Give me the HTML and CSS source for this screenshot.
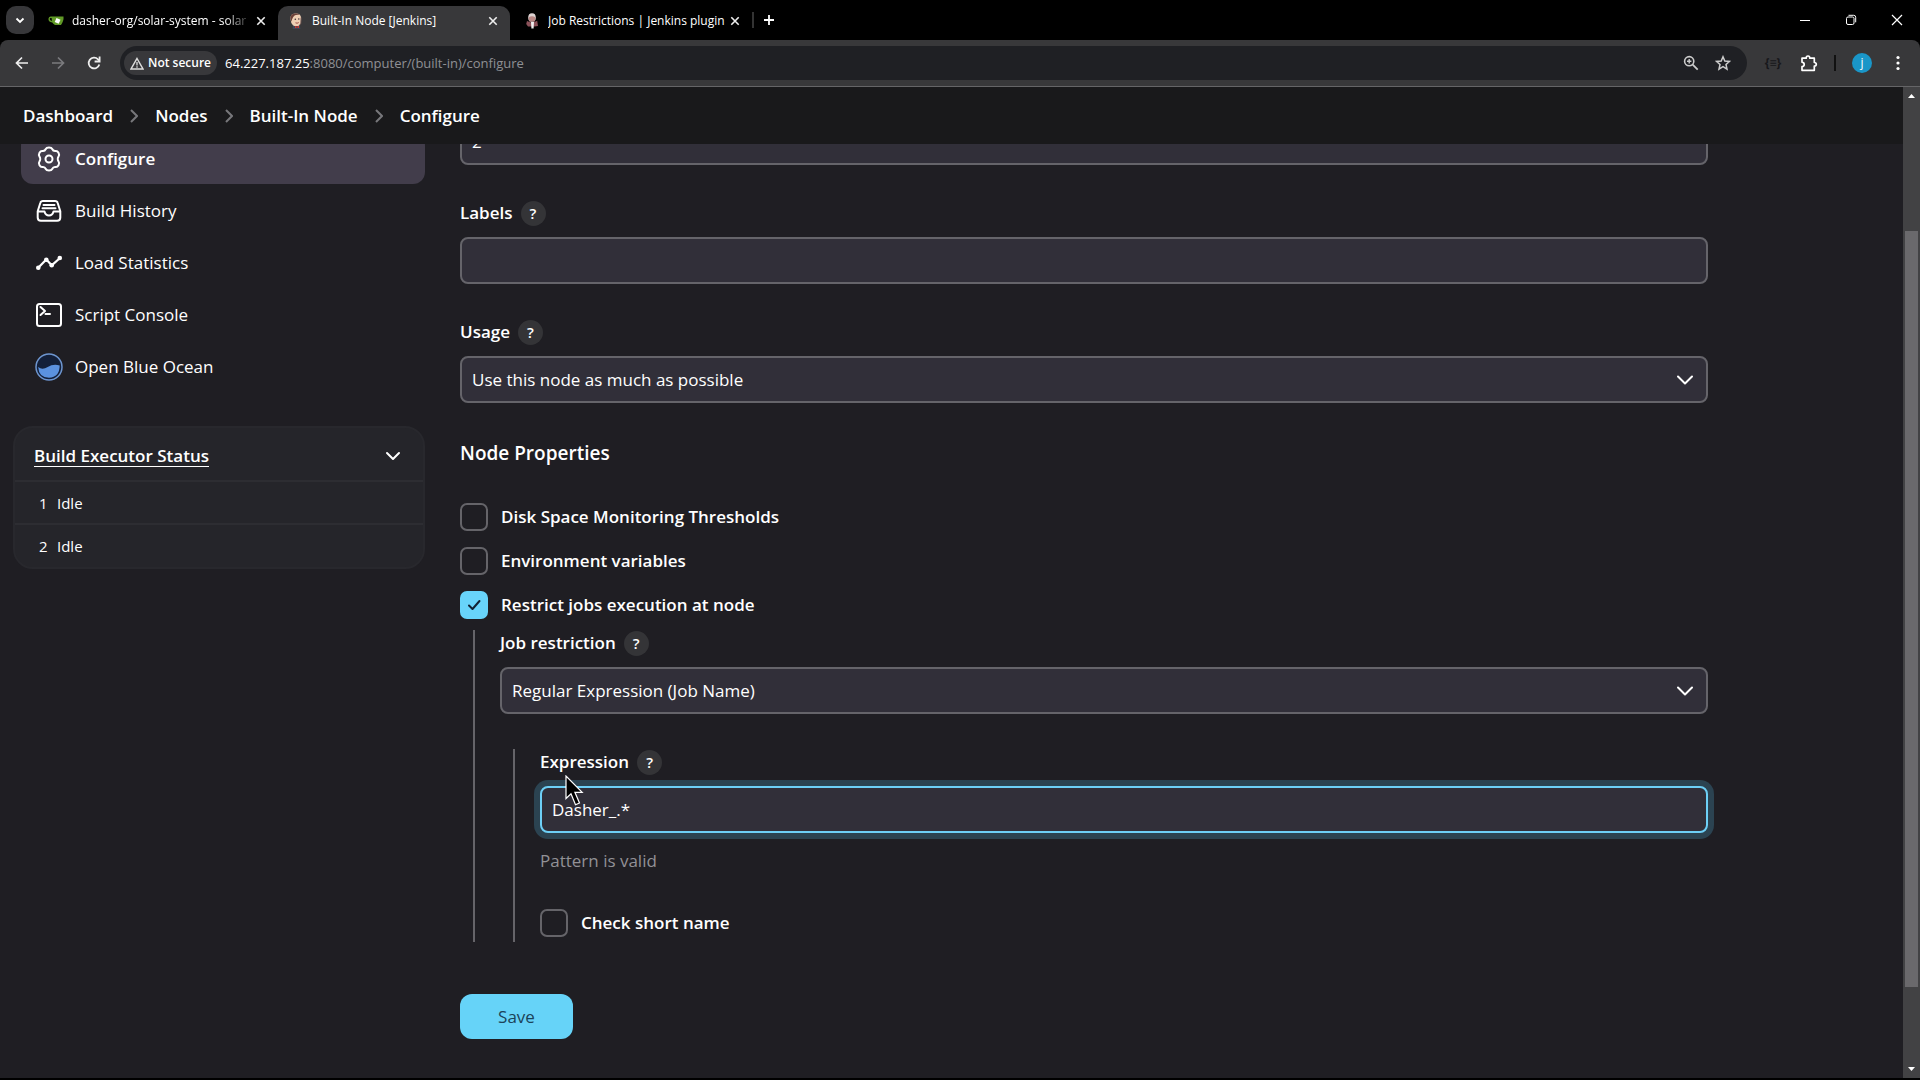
FILE: index.html
```
<!DOCTYPE html>
<html lang="en">
<head>
<meta charset="UTF-8">
<meta name="viewport" content="width=device-width, initial-scale=1.0">
<title>Built-In Node [Jenkins]</title>
<link rel="stylesheet" href="styles.css">
</head>
<body>
<div class="browser">
    <!-- Tab strip -->
    <div class="tab-strip">
        <button class="tab-search" aria-label="Search tabs">
            <svg width="12" height="12" viewBox="0 0 12 12"><path d="M2.5 4.5L6 8l3.5-3.5" fill="none" stroke="#fff" stroke-width="1.8"/></svg>
        </button>
        <div class="tab tab-first">
            <svg class="favicon" width="16" height="16" viewBox="0 0 16 16"><path d="M3.5 3.5H15.500q.5 4-2.500 8.500H7Q5 10.500 4.300 9.500 0 9 .5 5.500 1 3 3.500 3.500zM3.600 5q-2-.5-1.800 1 .2 1.700 2.200 2z" fill="#609926" fill-rule="evenodd"/><path d="M8.500 5l4 1.800-1.800 4-4-1.800z" fill="#fff"/></svg>
            <span class="tab-title faded">dasher-org/solar-system - solar</span>
            <button class="tab-close" aria-label="Close tab"><svg width="10" height="10" viewBox="0 0 10 10"><path d="M1.300 1.300l7.400 7.400M8.700 1.300L1.300 8.700" stroke="#eee" stroke-width="1.600"/></svg></button>
        </div>
        <div class="tab active">
            <svg class="favicon" width="16" height="16" viewBox="0 0 16 16"><path d="M2.500 6Q2 1 7 .6 12.500 0 13.200 5L13 10 11 13H5.500Q2.500 10 2.500 6z" fill="#efcfb4"/><path d="M2.500 6Q2 1 7 .6 10 .4 11.500 2 7 1 5.200 4L4 6.500l-.2 2.200z" fill="#6b4038"/><path d="M13.200 4.500l-.3 6-1.400 2" fill="none" stroke="#5a4646"/><circle cx="7.300" cy="6.200" r=".8" fill="#44333a"/><circle cx="10.800" cy="6" r=".8" fill="#44333a"/><path d="M7.500 9.800q1.700.9 3.200-.2" fill="none" stroke="#9c4a42"/><path d="M5 12.500l3.500 1.200 3.300-1.500.6 3.800H4.600z" fill="#3f4657"/><path d="M7 13l2 .8 2-1v2.500l-2-1-2 1z" fill="#d33833"/></svg>
            <span class="tab-title">Built-In Node [Jenkins]</span>
            <button class="tab-close" aria-label="Close tab"><svg width="10" height="10" viewBox="0 0 10 10"><path d="M1.300 1.300l7.400 7.400M8.700 1.300L1.300 8.700" stroke="#eee" stroke-width="1.600"/></svg></button>
        </div>
        <div class="tab tab-last">
            <svg class="favicon" width="16" height="16" viewBox="0 0 16 16"><ellipse cx="8" cy="4.500" rx="3.800" ry="4.300" fill="#dcd3d2"/><path d="M4.500 4.500q3.500-2.500 7 0l-.6 4H5.300z" fill="#b88683"/><path d="M3 8q5 3 10.200-.2L14 13l-3.500.5H4L2.200 11z" fill="#8b5159"/><path d="M7 9h3l-.4 6.500H7.400z" fill="#eee"/></svg>
            <span class="tab-title">Job Restrictions | Jenkins plugin</span>
            <button class="tab-close" aria-label="Close tab"><svg width="10" height="10" viewBox="0 0 10 10"><path d="M1.300 1.300l7.400 7.400M8.700 1.300L1.300 8.700" stroke="#eee" stroke-width="1.600"/></svg></button>
        </div>
        <button class="new-tab" aria-label="New tab"><svg width="12" height="12" viewBox="0 0 12 12"><path d="M6 1v10M1 6h10" stroke="#fff" stroke-width="1.800"/></svg></button>
        <div class="window-controls">
            <button aria-label="Minimize"><svg width="12" height="12" viewBox="0 0 12 12"><path d="M1 6.500h10" stroke="#fff"/></svg></button>
            <button aria-label="Restore"><svg width="12" height="12" viewBox="0 0 12 12"><rect x="1.500" y="3" width="7.500" height="7.500" rx="1.500" fill="none" stroke="#fff"/><path d="M3.500 1.300h5.200q2 0 2 2v5" fill="none" stroke="#fff"/></svg></button>
            <button aria-label="Close"><svg width="12" height="12" viewBox="0 0 12 12"><path d="M1 1l10 10M11 1L1 11" stroke="#fff" stroke-width="1.200"/></svg></button>
        </div>
    </div>

    <!-- Address bar -->
    <div class="toolbar">
        <button class="nav" aria-label="Back"><svg width="16" height="16" viewBox="0 0 16 16"><path d="M14 8H3M8 2.500L2.500 8 8 13.500" fill="none" stroke="#eee" stroke-width="1.700"/></svg></button>
        <button class="nav" aria-label="Forward"><svg width="16" height="16" viewBox="0 0 16 16"><path d="M2 8h11M8 2.500L13.500 8 8 13.500" fill="none" stroke="#7b7b7e" stroke-width="1.700"/></svg></button>
        <button class="nav" aria-label="Reload"><svg width="16" height="16" viewBox="0 0 16 16"><path d="M13.300 9.500A5.400 5.400 0 1 1 12 4.300l1.300 1.300" fill="none" stroke="#eee" stroke-width="1.800"/><path d="M13.600 1.500v5H8.600" fill="none" stroke="#eee" stroke-width="1.800"/></svg></button>
        <div class="omnibox">
            <button class="chip"><svg width="14" height="13" viewBox="0 0 14 13"><path d="M7 1.500L13 12H1z" fill="none" stroke="#ddd" stroke-width="1.500"/><path d="M7 5v3.500M7 9.300v1.500" stroke="#ddd" stroke-width="1.300"/></svg>Not secure</button>
            <a class="url" href="#">64.227.187.25<span>:8080/computer/(built-in)/configure</span></a>
            <button class="omni-icon" aria-label="Zoom"><svg width="16" height="16" viewBox="0 0 16 16"><circle cx="6.200" cy="6.200" r="4.600" fill="none" stroke="#ccc" stroke-width="1.600"/><path d="M9.700 9.700l5 5" stroke="#ccc" stroke-width="1.800"/><path d="M6.200 4v4.400M4 6.200h4.400" stroke="#ccc" stroke-width="1.400"/></svg></button>
            <button class="omni-icon" aria-label="Bookmark"><svg width="16" height="16" viewBox="0 0 16 16"><path d="M8 1.800l1.800 4.200 4.700.4-3.500 3.100 1 4.600L8 11.700l-4 2.400 1-4.600L1.500 6.400 6.200 6z" fill="none" stroke="#ccc" stroke-width="1.500"/></svg></button>
        </div>
        <div class="toolbar-end">
            <button class="ext" aria-label="Extension">{≡}</button>
            <button class="nav" aria-label="Extensions"><svg width="18" height="18" viewBox="0 0 18 18"><path d="M2 4.200h4.200q0-2.200 1.800-2.200t1.800 2.200h4.500v4.300q2 .1 2 1.800t-2 1.800v4.200H2v-3.600q2.200-.3 2.200-2.200T2 8.200z" fill="none" stroke="#fff" stroke-width="1.700" stroke-linejoin="round"/></svg></button>
            <span class="divider"></span>
            <button class="avatar">j</button>
            <button class="nav" aria-label="Menu"><svg width="4" height="16" viewBox="0 0 4 16"><circle cx="2" cy="2.500" r="1.600" fill="#fff"/><circle cx="2" cy="8" r="1.600" fill="#fff"/><circle cx="2" cy="13.500" r="1.600" fill="#fff"/></svg></button>
        </div>
    </div>

    <div class="viewport">
        <div class="page">
            <nav class="breadcrumbs">
                <a href="#">Dashboard</a>
                <svg width="8" height="14" viewBox="0 0 8 14"><path d="M1 1l6 6-6 6"/></svg>
                <a href="#">Nodes</a>
                <svg width="8" height="14" viewBox="0 0 8 14"><path d="M1 1l6 6-6 6"/></svg>
                <a href="#">Built-In Node</a>
                <svg width="8" height="14" viewBox="0 0 8 14"><path d="M1 1l6 6-6 6"/></svg>
                <a href="#">Configure</a>
            </nav>

            <div class="columns">
                <aside class="side-panel">
                    <nav class="tasks">
                        <a class="task current" href="#">
                            <svg viewBox="0 0 28 28"><path d="M14 2.500c1.500 0 2.700.3 3.200 1.500.7 1.600 1.600 2.200 3.300 2 1.400-.2 2.300.5 3 1.800s1 2.400.1 3.500c-1.100 1.400-1.100 4 0 5.400.9 1.100.6 2.200-.1 3.500s-1.600 2-3 1.800c-1.700-.2-2.600.4-3.300 2-.5 1.200-1.700 1.500-3.200 1.500s-2.700-.3-3.200-1.500c-.7-1.600-1.600-2.200-3.300-2-1.400.2-2.300-.5-3-1.800s-1-2.400-.1-3.500c1.100-1.400 1.100-4 0-5.400-.9-1.100-.6-2.200.1-3.500s1.600-2 3-1.800c1.700.2 2.600-.4 3.300-2 .5-1.200 1.700-1.500 3.200-1.500z"/><circle cx="14" cy="14" r="3.500"/></svg>
                            Configure
                        </a>
                        <a class="task" href="#">
                            <svg viewBox="0 0 28 28"><path d="M2.700 14.300L5.300 6Q5.800 4 8 4h12q2.200 0 2.700 2l2.600 8.300v6.200q0 3.200-3.200 3.200H5.900q-3.200 0-3.200-3.200zM2.700 14.500h6.800q1 4 4.500 4t4.500-4h6.800"/><path d="M8.500 8h11M7.500 11.300h13"/></svg>
                            Build History
                        </a>
                        <a class="task" href="#">
                            <svg viewBox="0 0 28 28"><path d="M3 19l8.300-8.500 5.400 5.800L25 9" stroke-width="2.200"/><g fill="#fff" stroke="none"><circle cx="3.300" cy="18.700" r="2.300"/><circle cx="11.300" cy="10.700" r="2.300"/><circle cx="16.700" cy="16.300" r="2.300"/><circle cx="24.800" cy="9" r="2.300"/></g></svg>
                            Load Statistics
                        </a>
                        <a class="task" href="#">
                            <svg viewBox="0 0 28 28"><rect x="2" y="3" width="24" height="22" rx="2.500"/><path d="M5.500 6l4.500 4-4.500 4M10.500 13h4.500"/></svg>
                            Script Console
                        </a>
                        <a class="task" href="#">
                            <svg viewBox="0 0 28 28"><circle cx="14" cy="14" r="13" fill="#13203a" stroke="#6d95cf" stroke-width="1.500"/><path d="M3.200 14q4 3.300 9.500 0t12-1.500q-.2 11.800-10.700 12.300Q3.700 24.500 3.200 14z" fill="#5b92df" stroke="none"/></svg>
                            Open Blue Ocean
                        </a>
                    </nav>
                    <section class="executors">
                        <header>
                            <a href="#">Build Executor Status</a>
                            <button aria-label="Collapse"><svg width="16" height="10" viewBox="0 0 16 10"><path class="chevron" d="M2 2l6 6 6-6"/></svg></button>
                        </header>
                        <table>
                            <tr><td class="number">1</td><td>Idle</td></tr>
                            <tr><td class="number">2</td><td>Idle</td></tr>
                        </table>
                    </section>
                </aside>

                <form class="config">
                    <div class="field">
                        <input class="control" type="text" value="2" aria-label="Number of executors">
                    </div>
                    <div class="field">
                        <div class="field-label"><label for="labels">Labels</label><button type="button" class="help">?</button></div>
                        <input class="control" type="text" id="labels">
                    </div>
                    <div class="field">
                        <div class="field-label"><label for="usage">Usage</label><button type="button" class="help">?</button></div>
                        <div class="select">
                            <select class="control" id="usage"><option>Use this node as much as possible</option></select>
                            <svg width="16" height="10" viewBox="0 0 16 10"><path class="chevron" d="M1 1.500l7 7 7-7"/></svg>
                        </div>
                    </div>

                    <h2>Node Properties</h2>
                    <div class="checks">
                        <label class="check"><input type="checkbox">Disk Space Monitoring Thresholds</label>
                        <label class="check"><input type="checkbox">Environment variables</label>
                        <label class="check"><input type="checkbox" checked>Restrict jobs execution at node</label>
                    </div>
                    <div class="nested">
                        <div class="field">
                            <div class="field-label"><label for="restriction">Job restriction</label><button type="button" class="help">?</button></div>
                            <div class="select">
                                <select class="control" id="restriction"><option>Regular Expression (Job Name)</option></select>
                                <svg width="16" height="10" viewBox="0 0 16 10"><path class="chevron" d="M1 1.500l7 7 7-7"/></svg>
                            </div>
                        </div>
                        <div class="nested nested-inner">
                            <div class="field-label">
                                <label for="expression">Expression</label><button type="button" class="help">?</button>
                                <svg class="cursor" width="20" height="32" viewBox="0 0 20 32"><path d="M1 1v22.500l5-4.800 4.500 11 4-1.700-4.600-10.700h7.300z" fill="#000" stroke="#fff" stroke-width="1.200"/></svg>
                            </div>
                            <input class="control focused" type="text" id="expression" value="Dasher_.*">
                            <p class="validation">Pattern is valid</p>
                            <label class="check"><input type="checkbox">Check short name</label>
                        </div>
                    </div>
                    <button type="button" class="save">Save</button>
                </form>
            </div>
        </div>

        <div class="scrollbar">
            <svg width="17" height="17" viewBox="0 0 17 17"><path d="M5 11l3.500-4 3.500 4z" fill="#fff"/></svg>
            <div class="track"><div class="thumb"></div></div>
            <svg width="17" height="17" viewBox="0 0 17 17"><path d="M5 6l3.500 4L12 6z" fill="#fff"/></svg>
        </div>
    </div>
</div>
</body>
</html>
```
FILE: styles.css
```
* {
    box-sizing: border-box;
}
body {
    margin: 0;
    background-color: #000;
    color: #fff;
    font-family: "Open Sans", "Noto Sans", sans-serif;
    font-size: 17px;
    line-height: 24px;
}
a {
    color: inherit;
    text-decoration: none;
}
button {
    display: flex;
    align-items: center;
    justify-content: center;
    padding: 0;
    border: none;
    background: none;
    color: inherit;
    font: inherit;
    cursor: pointer;
}
svg {
    flex-shrink: 0;
}
.browser {
    display: flex;
    flex-direction: column;
    height: 100vh;
    padding-bottom: 2px;
}

/* Tab strip */
.tab-strip {
    display: flex;
    align-items: center;
    height: 40px;
    flex-shrink: 0;
    padding-left: 6px;
    font-size: 12px;
}
.tab-search {
    width: 28px;
    height: 28px;
    border-radius: 10px;
    background-color: #37373a;
}
.tab {
    display: flex;
    align-items: center;
    gap: 4px;
    height: 34px;
    align-self: flex-end;
    padding: 0 12px 4px 10px;
}
.tab-first {
    width: 244px;
    padding-left: 14px;
}
.tab-last {
    width: 242px;
    padding-left: 14px;
}
.tab.active {
    width: 232px;
    border-radius: 10px 10px 0 0;
    background-color: #38383a;
}
.favicon {
    margin-right: 4px;
}
.tab-title {
    flex: 1;
    overflow: hidden;
    white-space: nowrap;
}
.faded {
    mask-image: linear-gradient(to right, #000 85%, transparent);
}
.tab-close {
    width: 10px;
    height: 16px;
}
.new-tab {
    width: 32px;
    height: 16px;
    border-left: 2px solid #333;
}
.window-controls {
    display: flex;
    margin-left: auto;
}
.window-controls button {
    width: 46px;
    height: 40px;
}

/* Toolbar */
.toolbar {
    display: flex;
    align-items: center;
    height: 47px;
    flex-shrink: 0;
    padding: 0 4px;
    border-bottom: 1px solid #656567;
    border-radius: 8px 8px 0 0;
    background-color: #38383a;
}
.nav {
    width: 36px;
    height: 36px;
}
.omnibox {
    display: flex;
    align-items: center;
    flex: 1;
    height: 34px;
    margin-left: 8px;
    padding: 0 8px 0 4px;
    border-radius: 17px;
    background-color: #1f2024;
}
.chip {
    gap: 4px;
    height: 24px;
    padding: 0 6px;
    border-radius: 12px;
    background-color: #38383b;
    font-size: 12px;
    font-weight: 600;
}
.url {
    flex: 1;
    margin-left: 8px;
    font-size: 13px;
}
.url span {
    color: #8f9094;
}
.omni-icon {
    width: 32px;
    height: 32px;
}
.toolbar-end {
    display: flex;
    align-items: center;
    margin-left: 8px;
}
.ext {
    width: 36px;
    color: #17171a;
    font-size: 12px;
    font-weight: 700;
}
.divider {
    width: 2px;
    height: 16px;
    margin: 0 16px 0 7px;
    background-color: #111;
}
.avatar {
    width: 20px;
    height: 20px;
    margin-right: 8px;
    border-radius: 50%;
    background-color: #1a96c8;
    font-size: 12px;
}

/* Jenkins page */
.viewport {
    display: flex;
    flex: 1;
    min-height: 0;
}
.page {
    flex: 1;
    overflow: hidden;
    background-color: #1f1e23;
}
.breadcrumbs {
    position: sticky;
    top: 0;
    z-index: 1;
    display: flex;
    align-items: center;
    gap: 17px;
    height: 57px;
    padding: 0 23px;
    background-color: #19191b;
    font-weight: 600;
}
.breadcrumbs path {
    fill: none;
    stroke: #77777b;
    stroke-width: 2;
}
.columns {
    display: flex;
    gap: 35px;
    margin-top: -26px;
    padding-left: 13px;
}
.side-panel {
    width: 412px;
    flex-shrink: 0;
    padding-top: 16px;
}
.tasks {
    display: flex;
    flex-direction: column;
    gap: 2px;
    margin: 0 0 34px 8px;
}
.task {
    display: flex;
    align-items: center;
    gap: 12px;
    height: 50px;
    padding-left: 14px;
    border-radius: 12px;
}
.task.current {
    background-color: #423d4b;
    font-weight: 600;
}
.task svg {
    width: 28px;
    height: 28px;
    fill: none;
    stroke: #fff;
    stroke-width: 2;
    stroke-linecap: round;
    stroke-linejoin: round;
}
.executors {
    overflow: hidden;
    border: 2px solid #28282d;
    border-radius: 20px;
    background-color: #25252a;
}
.executors header {
    display: flex;
    align-items: center;
    justify-content: space-between;
    height: 52px;
    padding: 4px 22px 0 19px;
    font-weight: 600;
}
.executors header a {
    border-bottom: 1px solid #fff;
    line-height: 20px;
}
.executors table {
    width: 100%;
    border-collapse: collapse;
    font-size: 15px;
}
.executors td {
    height: 43px;
    padding: 0;
    border-top: 2px solid #2d2d32;
}
.executors .number {
    width: 42px;
    padding-left: 24px;
}
.chevron {
    fill: none;
    stroke: #fff;
    stroke-width: 2;
    stroke-linecap: round;
    stroke-linejoin: round;
}

/* Configuration form */
.config {
    flex: 1;
    max-width: 1248px;
}
.field {
    margin-bottom: 35px;
}
.field-label {
    position: relative;
    display: flex;
    align-items: center;
    gap: 8px;
    height: 26px;
    margin-bottom: 11px;
    font-weight: 600;
}
.help {
    width: 25px;
    height: 25px;
    border-radius: 50%;
    background-color: #343437;
    font-size: 15px;
}
.control {
    display: block;
    width: 100%;
    height: 47px;
    padding: 0 10px;
    border: 2px solid #65646a;
    border-radius: 8px;
    outline: none;
    appearance: none;
    background-color: #312f39;
    color: #fff;
    font: inherit;
}
.focused {
    border-color: #6dcff6;
    box-shadow: 0 0 0 6px #2b4351;
}
.select {
    display: grid;
    align-items: center;
}
.select select,
.select svg {
    grid-area: 1 / 1;
}
.select svg {
    justify-self: end;
    margin-right: 15px;
    pointer-events: none;
}
h2 {
    margin: 0 0 35px;
    font-size: 19px;
    font-weight: 600;
    line-height: 30px;
}
.checks {
    display: flex;
    flex-direction: column;
    gap: 16px;
}
.check {
    display: flex;
    align-items: center;
    gap: 13px;
    height: 28px;
    font-weight: 600;
}
.check input {
    width: 28px;
    height: 28px;
    margin: 0;
    border: 2px solid #656469;
    border-radius: 7px;
    appearance: none;
}
.check input:checked {
    border-color: #68d4fa;
    background: #68d4fa url("data:image/svg+xml,%3Csvg xmlns='http://www.w3.org/2000/svg' viewBox='0 0 24 24'%3E%3Cpath d='M7 12.500l3.500 3.500L17.500 8' fill='none' stroke='%23123' stroke-width='2' stroke-linecap='round' stroke-linejoin='round'/%3E%3C/svg%3E") center / 24px 24px;
}
.nested {
    margin: 11px 0 0 13px;
    padding-left: 25px;
    border-left: 2px solid #656469;
}
.nested-inner {
    padding-bottom: 5px;
}
.cursor {
    position: absolute;
    left: 25px;
    top: 26px;
    z-index: 1;
}
.validation {
    margin: 16px 0 36px;
    color: #929196;
}
.save {
    width: 113px;
    height: 45px;
    margin-top: 52px;
    border-radius: 12px;
    background-color: #66d3f8;
    color: #1c4359;
}

/* Scrollbar */
.scrollbar {
    display: flex;
    flex-direction: column;
    width: 17px;
    background-color: #424244;
}
.track {
    display: grid;
    grid-template-rows: 127fr 756fr 74fr;
    flex: 1;
}
.thumb {
    grid-row: 2;
    margin: 0 2px;
    background-color: #6a696c;
}
```
